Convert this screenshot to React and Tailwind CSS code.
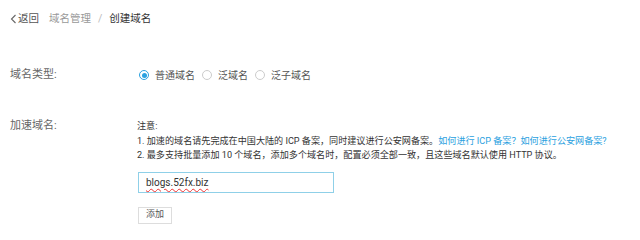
export default function App() {
  const font = { fontFamily: "Roboto, 'Noto Sans CJK SC', sans-serif" };
  return (
    <div className="w-[640px] h-[240px] bg-white text-[#333] overflow-hidden" style={font}>
      <div className="flex items-center h-[37px] pl-[10px] text-[10.5px]">
        <span className="text-[#555] flex items-center">
          <svg width="7" height="10" viewBox="0 0 7 10" className="mr-[1px]"><path d="M5.5 1 L1.5 5 L5.5 9" fill="none" stroke="#666" strokeWidth="1.1" /></svg>
          返回
        </span>
        <span className="ml-[10px] text-[#999]">域名管理</span>
        <span className="mx-[7px] text-[#bbb]">/</span>
        <span className="text-[#333]">创建域名</span>
      </div>
      <div className="flex items-center mt-[29px] h-[18px] text-[11px]">
        <div className="w-[139px] pl-[10px] text-[#666]">域名类型:</div>
        <label className="flex items-center">
          <span className="w-[10px] h-[10px] rounded-full border border-[#2ba1e0] flex items-center justify-center">
            <span className="w-[5px] h-[5px] rounded-full bg-[#2ba1e0]" />
          </span>
          <span className="ml-[6px] text-[#555] text-[10px]">普通域名</span>
        </label>
        <label className="flex items-center ml-[7px]">
          <span className="w-[10px] h-[10px] rounded-full border border-[#ccc]" />
          <span className="ml-[6px] text-[#555] text-[10px]">泛域名</span>
        </label>
        <label className="flex items-center ml-[7px]">
          <span className="w-[10px] h-[10px] rounded-full border border-[#ccc]" />
          <span className="ml-[6px] text-[#555] text-[10px]">泛子域名</span>
        </label>
      </div>
      <div className="flex mt-[34px] text-[11px]">
        <div className="w-[137px] pl-[10px] text-[#666] leading-[16px]">加速域名:</div>
        <div className="flex flex-col">
          <div className="text-[9.1px] leading-[14.5px] text-[#333] pt-[1px] whitespace-nowrap">
            <div>注意:</div>
            <div>1. 加速的域名请先完成在中国大陆的 ICP 备案，同时建议进行公安网备案。<span className="text-[#2ba1e0]">如何进行 ICP 备案？如何进行公安网备案?</span></div>
            <div>2. 最多支持批量添加 10 个域名，添加多个域名时，配置必须全部一致，且这些域名默认使用 HTTP 协议。</div>
          </div>
          <div className="mt-[9px] ml-[1px] w-[196px] h-[21px] border border-[#8fd0e8] flex items-center px-[7px] text-[10px] text-[#333]">
            <span className="underline decoration-wavy decoration-[#e33] underline-offset-2">blogs.52fx.biz</span>
          </div>
          <button className="mt-[14px] ml-[1px] w-[34px] h-[17px] border border-[#ddd] bg-white text-[9px] text-[#555] flex items-center justify-center">添加</button>
        </div>
      </div>
    </div>
  );
}
